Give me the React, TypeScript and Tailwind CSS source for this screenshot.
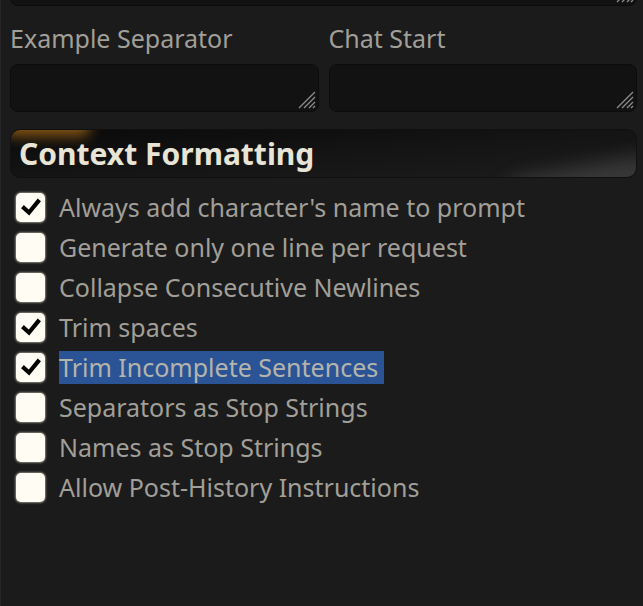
import { ReactNode } from 'react'

const options = [
  { label: "Always add character's name to prompt", checked: true },
  { label: 'Generate only one line per request', checked: false },
  { label: 'Collapse Consecutive Newlines', checked: false },
  { label: 'Trim spaces', checked: true },
  { label: 'Trim Incomplete Sentences', checked: true, selected: true },
  { label: 'Separators as Stop Strings', checked: false },
  { label: 'Names as Stop Strings', checked: false },
  { label: 'Allow Post-History Instructions', checked: false },
]

function ResizeGrip() {
  return (
    <svg
      className="absolute right-[2px] bottom-[2px]"
      width="18"
      height="18"
      viewBox="0 0 18 18"
    >
      <path
        d="M1 17 L17 1 M6 17 L17 6 M11 17 L17 11 M15 17 L17 15"
        stroke="#8c8c8c"
        strokeWidth="1.3"
      />
    </svg>
  )
}

function TextBox({ className }: { className?: string }) {
  return (
    <div
      className={`relative rounded-[8px] border border-[#0c0c0c] bg-[#121212] ${className ?? ''}`}
    >
      <ResizeGrip />
    </div>
  )
}

function Checkbox({ checked }: { checked: boolean }) {
  return (
    <div className="flex h-[29px] w-[29px] shrink-0 items-center justify-center rounded-[5px] bg-[#fffdf3] shadow-[0_0_2px_1px_rgba(255,250,230,0.45)]">
      {checked && (
        <svg width="20" height="18" viewBox="0 0 20 18">
          <path
            d="M3 10 L8 14.5 L17 3.5"
            fill="none"
            stroke="#000"
            strokeWidth="4.2"
            strokeLinecap="square"
            strokeLinejoin="miter"
          />
        </svg>
      )}
    </div>
  )
}

function Row({ children, checked }: { children: ReactNode; checked: boolean }) {
  return (
    <label className="flex h-[40px] items-center gap-[14px] pl-[6px]">
      <Checkbox checked={checked} />
      {children}
    </label>
  )
}

export default function App() {
  return (
    <div
      className="h-[606px] w-full overflow-hidden border-l border-[#262626] bg-[#1b1b1b] pl-[9px] pr-[6px]"
      style={{ fontFamily: '"Noto Sans", "Open Sans", sans-serif' }}
    >
      <TextBox className="-mt-[40px] h-[46px]" />

      <div className="mt-[16px] grid grid-cols-2 gap-x-[10px] text-[25px] leading-[32px] text-[#a19f98]">
        <div>Example Separator</div>
        <div>Chat Start</div>
        <TextBox className="mt-[10px] h-[48px]" />
        <TextBox className="mt-[10px] h-[48px]" />
      </div>

      <div className="relative mt-[17px] h-[49px] overflow-hidden rounded-[10px] border border-[#101010] bg-gradient-to-br from-[#0a0a0a] via-[#141414] to-[#1c1c1c]">
        <div className="absolute -left-[10px] -top-[16px] h-[22px] w-[90px] rounded-full bg-[#c07a1c] opacity-70 blur-[7px]" />
        <div className="absolute -bottom-[18px] -right-[20px] h-[28px] w-[150px] -rotate-[10deg] rounded-full bg-[#9a9a9a] opacity-25 blur-[10px]" />
        <div className="relative pl-[8px] text-[30px] font-bold leading-[47px] text-[#e8e4d6]">
          Context Formatting
        </div>
      </div>

      <div className="mt-[9px] text-[25px] text-[#a19f98]">
        {options.map((o) => (
          <Row key={o.label} checked={o.checked}>
            <span
              className={
                o.selected
                  ? 'bg-[#2a5496] pr-[6px] leading-[33px] text-[#b5b4ac]'
                  : 'leading-[33px]'
              }
            >
              {o.label}
            </span>
          </Row>
        ))}
      </div>
    </div>
  )
}
